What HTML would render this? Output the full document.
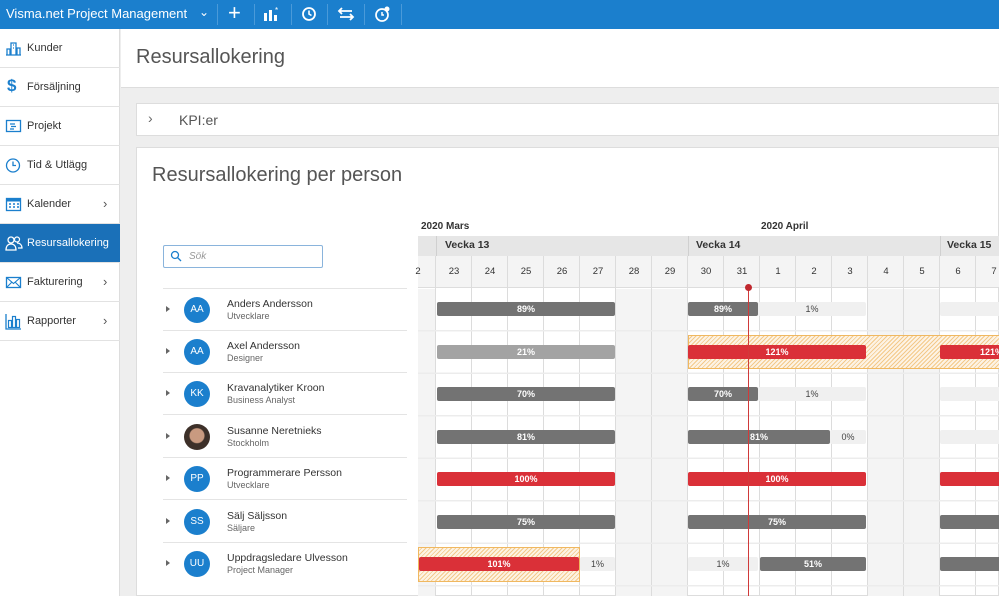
<!DOCTYPE html>
<html><head><meta charset="utf-8"><style>
*{box-sizing:border-box;margin:0;padding:0}
body{width:999px;height:596px;overflow:hidden;position:relative;background:#eeeeee;font-family:"Liberation Sans",sans-serif;color:#333}
.a{position:absolute}
#top{left:0;top:0;width:999px;height:29px;background:#1b7fcd}
#top .t{left:6px;top:6px;color:#fff;font-size:13px}
.sep{top:4px;width:1px;height:21px;background:#4a9ad9}
#side{left:0;top:29px;width:120px;height:567px;background:#fff;border-right:1px solid #ddd}
.it{left:0;width:120px;height:39px;border-bottom:1px solid #e2e2e2;font-size:11px;color:#333}
.it span{position:absolute;left:27px;top:13px}
.it svg{position:absolute;left:5px;top:11px}
.it b{position:absolute;left:103px;top:11px;font-weight:normal;font-size:13px;color:#555}
.act{background:#1a70b8;color:#fff}
.bar{position:absolute;height:14px;border-radius:2px;font-size:9px;font-weight:bold;color:#fff;text-align:center;line-height:14px}
.d{background:#737373}.l{background:#a3a3a3}.r{background:#da3038}.e{background:#f0f0f0;color:#444;font-weight:normal}
.h{position:absolute;border:1px solid #f0b860;background:repeating-linear-gradient(-45deg,#fdf3e4 0 2px,#f3c98a 2px 3px)}
.nm{position:absolute;left:163px;width:244px;height:42px;border-bottom:1px solid #e4e4e4}
.av{position:absolute;left:21px;top:8px;width:26px;height:26px;border-radius:50%;background:#1b7fcd;color:#fff;font-size:10px;text-align:center;line-height:26px}
.nm .n{position:absolute;left:64px;top:9px;font-size:10.5px;color:#333}
.nm .s{position:absolute;left:64px;top:22px;font-size:9px;color:#666}
.nm .tr{position:absolute;left:3px;top:17px;width:0;height:0;border-left:4px solid #666;border-top:3.5px solid transparent;border-bottom:3.5px solid transparent}
.dy{position:absolute;top:256px;height:32px;width:36px;text-align:center;font-size:9.5px;line-height:32px;color:#333}
</style></head><body>
<div id="top" class="a">
<div class="a t">Visma.net Project Management</div>
<div class="a" style="left:199px;top:5px;color:#fff;font-size:12px">&#8964;</div>
<div class="a sep" style="left:217px"></div>
<div class="a" style="left:228px;top:1px;color:#fff;font-size:22px;line-height:24px">+</div>
<div class="a sep" style="left:254px"></div>
<svg class="a" style="left:263px;top:6px" width="18" height="16"><rect x="1" y="7" width="3" height="8" fill="#fff"/><rect x="6" y="4" width="3" height="11" fill="#fff"/><rect x="11" y="9" width="3" height="6" fill="#fff"/><text x="12" y="7" fill="#fff" font-size="8">*</text></svg>
<div class="a sep" style="left:291px"></div>
<svg class="a" style="left:301px;top:6px" width="16" height="16"><circle cx="8" cy="8" r="6" fill="none" stroke="#fff" stroke-width="1.8"/><path d="M8 4.5V8l2.5 1.5" fill="none" stroke="#fff" stroke-width="1.6"/></svg>
<div class="a sep" style="left:327px"></div>
<svg class="a" style="left:337px;top:6px" width="18" height="16"><path d="M2 5h13M5 2L2 5l3 3M16 11H3M13 8l3 3-3 3" fill="none" stroke="#fff" stroke-width="1.8"/></svg>
<div class="a sep" style="left:364px"></div>
<svg class="a" style="left:374px;top:5px" width="18" height="18"><circle cx="8" cy="10" r="6" fill="none" stroke="#fff" stroke-width="1.7"/><path d="M8 7v3h2" fill="none" stroke="#fff" stroke-width="1.5"/><circle cx="13" cy="4" r="2.5" fill="#fff"/></svg>
<div class="a sep" style="left:401px"></div>
</div>
<div id="side" class="a">
<div class="a it" style="top:0"><svg width="17" height="16"><path d="M1 15h15M2 15V9h3v6M6 15V3h5v12M12 15V8h3v7M8 5h1M8 8h1" fill="none" stroke="#1b7fcd" stroke-width="1.3"/></svg><span>Kunder</span></div>
<div class="a it" style="top:39px"><span style="left:7px;top:8px;color:#1b7fcd;font-size:17px;font-weight:bold">$</span><span>Försäljning</span></div>
<div class="a it" style="top:78px"><svg width="17" height="16"><rect x="1.5" y="2.5" width="14" height="11" fill="none" stroke="#1b7fcd" stroke-width="1.3"/><path d="M5 6h5M6 8.5h5M5 11h4" stroke="#1b7fcd" stroke-width="1.2"/></svg><span>Projekt</span></div>
<div class="a it" style="top:117px"><svg width="17" height="17"><circle cx="8" cy="8.5" r="6.5" fill="none" stroke="#1b7fcd" stroke-width="1.3"/><path d="M8 4.5v4h3" fill="none" stroke="#1b7fcd" stroke-width="1.3"/></svg><span>Tid &amp; Utlägg</span></div>
<div class="a it" style="top:156px"><svg width="17" height="16"><rect x="1.5" y="2.5" width="14" height="12" fill="none" stroke="#1b7fcd" stroke-width="1.3"/><rect x="1.5" y="2.5" width="14" height="3" fill="#1b7fcd"/><path d="M4 8h2M8 8h2M12 8h2M4 11h2M8 11h2M12 11h2" stroke="#1b7fcd" stroke-width="1.5"/></svg><span>Kalender</span><b>&#8250;</b></div>
<div class="a it act" style="top:195px"><svg width="18" height="16"><circle cx="6" cy="5" r="3" fill="none" stroke="#fff" stroke-width="1.3"/><path d="M1 15c0-4 2-6 5-6s5 2 5 6z" fill="none" stroke="#fff" stroke-width="1.3"/><circle cx="12" cy="4.5" r="2.5" fill="none" stroke="#fff" stroke-width="1.2"/><path d="M12 8c3 0 5 2 5 5h-4" fill="none" stroke="#fff" stroke-width="1.2"/></svg><span>Resursallokering</span></div>
<div class="a it" style="top:234px"><svg width="17" height="16"><rect x="1.5" y="3.5" width="14" height="10" fill="none" stroke="#1b7fcd" stroke-width="1.3"/><path d="M1.5 3.5l7 6 7-6M1.5 13.5l5-5M15.5 13.5l-5-5" fill="none" stroke="#1b7fcd" stroke-width="1.1"/></svg><span>Fakturering</span><b>&#8250;</b></div>
<div class="a it" style="top:273px"><svg width="17" height="17"><path d="M1 1v15h15" fill="none" stroke="#1b7fcd" stroke-width="1.3"/><rect x="3.5" y="7.5" width="3" height="7" fill="none" stroke="#1b7fcd" stroke-width="1.2"/><rect x="7.5" y="3.5" width="3" height="11" fill="none" stroke="#1b7fcd" stroke-width="1.2"/><rect x="11.5" y="6.5" width="3" height="8" fill="none" stroke="#1b7fcd" stroke-width="1.2"/></svg><span>Rapporter</span><b>&#8250;</b></div>
</div>
<div class="a" style="left:121px;top:29px;width:878px;height:59px;background:#fff;border-bottom:1px solid #ddd"></div>
<div class="a" style="left:136px;top:46px;font-size:20px;color:#555">Resursallokering</div>
<div class="a" style="left:136px;top:103px;width:863px;height:33px;background:#fff;border:1px solid #ddd"></div>
<div class="a" style="left:148px;top:110px;font-size:14px;color:#666">&#8250;</div>
<div class="a" style="left:179px;top:112px;font-size:14px;color:#555">KPI:er</div>
<div class="a" style="left:136px;top:147px;width:863px;height:449px;background:#fff;border:1px solid #ddd"></div>
<div class="a" style="left:152px;top:164px;font-size:20px;color:#555">Resursallokering per person</div>
<div class="a" style="left:163px;top:245px;width:160px;height:23px;border:1px solid #8ab4dc;border-radius:2px"></div>
<svg class="a" style="left:170px;top:250px" width="12" height="12"><circle cx="5" cy="5" r="3.5" fill="none" stroke="#1b7fcd" stroke-width="1.3"/><path d="M7.5 7.5L11 11" stroke="#1b7fcd" stroke-width="1.3"/></svg>
<div class="a" style="left:189px;top:251px;font-size:10px;color:#999;font-style:italic">Sök</div>
<div class="a" style="left:163px;top:288px;width:244px;height:1px;background:#e4e4e4"></div>
<div class="nm" style="top:289px"><div class="tr"></div><div class="av">AA</div><div class="n">Anders Andersson</div><div class="s">Utvecklare</div></div>
<div class="nm" style="top:331px"><div class="tr"></div><div class="av">AA</div><div class="n">Axel Andersson</div><div class="s">Designer</div></div>
<div class="nm" style="top:373px"><div class="tr"></div><div class="av">KK</div><div class="n">Kravanalytiker Kroon</div><div class="s">Business Analyst</div></div>
<div class="nm" style="top:416px"><div class="tr"></div><div class="av" style="background:radial-gradient(circle at 50% 45%,#c99a80 0 7px,#3d3029 8px)"></div><div class="n">Susanne Neretnieks</div><div class="s">Stockholm</div></div>
<div class="nm" style="top:458px"><div class="tr"></div><div class="av">PP</div><div class="n">Programmerare Persson</div><div class="s">Utvecklare</div></div>
<div class="nm" style="top:501px"><div class="tr"></div><div class="av">SS</div><div class="n">Sälj Säljsson</div><div class="s">Säljare</div></div>
<div class="nm" style="top:543px;border:none"><div class="tr"></div><div class="av">UU</div><div class="n">Uppdragsledare Ulvesson</div><div class="s">Project Manager</div></div>
<!-- chart -->
<div class="a" style="left:421px;top:221px;font-size:10px;font-weight:bold;color:#333">2020 Mars</div>
<div class="a" style="left:761px;top:221px;font-size:10px;font-weight:bold;color:#333">2020 April</div>
<div class="a" style="left:418px;top:236px;width:581px;height:20px;background:#e6e6e6"></div>
<div class="a" style="left:445px;top:239px;font-size:10.5px;font-weight:bold">Vecka 13</div>
<div class="a" style="left:696px;top:239px;font-size:10.5px;font-weight:bold">Vecka 14</div>
<div class="a" style="left:947px;top:239px;font-size:10.5px;font-weight:bold">Vecka 15</div>
<div class="a" style="left:418px;top:256px;width:581px;height:32px;background:#f4f4f4;border-bottom:1px solid #ddd"></div>
<div class="a" style="left:418px;top:289px;width:18px;height:307px;background:#f4f4f4"></div>
<div class="a" style="left:616px;top:289px;width:72px;height:307px;background:#f4f4f4"></div>
<div class="a" style="left:868px;top:289px;width:72px;height:307px;background:#f4f4f4"></div>
<div class="a" style="left:418px;top:256px;width:581px;height:340px;background:repeating-linear-gradient(90deg,transparent 0 17px,#dcdcdc 17px 18px,transparent 18px 36px)"></div>
<div class="a" style="left:418px;top:289px;width:581px;height:307px;background:repeating-linear-gradient(180deg,transparent 0 41px,#ececec 41px 42.5px)"></div>
<div class="a" style="left:436px;top:236px;width:1px;height:20px;background:#d0d0d0"></div>
<div class="a" style="left:688px;top:236px;width:1px;height:20px;background:#d0d0d0"></div>
<div class="a" style="left:940px;top:236px;width:1px;height:20px;background:#d0d0d0"></div>
<div class="dy" style="left:400px">2</div><div class="dy" style="left:436px">23</div><div class="dy" style="left:472px">24</div><div class="dy" style="left:508px">25</div><div class="dy" style="left:544px">26</div><div class="dy" style="left:580px">27</div><div class="dy" style="left:616px">28</div><div class="dy" style="left:652px">29</div><div class="dy" style="left:688px">30</div><div class="dy" style="left:724px">31</div><div class="dy" style="left:760px">1</div><div class="dy" style="left:796px">2</div><div class="dy" style="left:832px">3</div><div class="dy" style="left:868px">4</div><div class="dy" style="left:904px">5</div><div class="dy" style="left:940px">6</div><div class="dy" style="left:976px">7</div>
<div class="h" style="left:688px;top:335px;width:320px;height:34px"></div>
<div class="h" style="left:418px;top:547px;width:162px;height:35px"></div>
<div class="bar d" style="left:437px;top:302px;width:178px">89%</div>
<div class="bar d" style="left:688px;top:302px;width:70px">89%</div>
<div class="bar e" style="left:758px;top:302px;width:108px">1%</div>
<div class="bar e" style="left:940px;top:302px;width:70px"></div>
<div class="bar l" style="left:437px;top:345px;width:178px">21%</div>
<div class="bar r" style="left:688px;top:345px;width:178px">121%</div>
<div class="bar r" style="left:940px;top:345px;width:70px;text-align:left;padding-left:40px">121%</div>
<div class="bar d" style="left:437px;top:387px;width:178px">70%</div>
<div class="bar d" style="left:688px;top:387px;width:70px">70%</div>
<div class="bar e" style="left:758px;top:387px;width:108px">1%</div>
<div class="bar e" style="left:940px;top:387px;width:70px"></div>
<div class="bar d" style="left:437px;top:430px;width:178px">81%</div>
<div class="bar d" style="left:688px;top:430px;width:142px">81%</div>
<div class="bar e" style="left:830px;top:430px;width:36px">0%</div>
<div class="bar e" style="left:940px;top:430px;width:70px"></div>
<div class="bar r" style="left:437px;top:472px;width:178px">100%</div>
<div class="bar r" style="left:688px;top:472px;width:178px">100%</div>
<div class="bar r" style="left:940px;top:472px;width:70px"></div>
<div class="bar d" style="left:437px;top:515px;width:178px">75%</div>
<div class="bar d" style="left:688px;top:515px;width:178px">75%</div>
<div class="bar d" style="left:940px;top:515px;width:70px"></div>
<div class="bar r" style="left:419px;top:557px;width:160px">101%</div>
<div class="bar e" style="left:580px;top:557px;width:35px">1%</div>
<div class="bar e" style="left:688px;top:557px;width:70px">1%</div>
<div class="bar d" style="left:760px;top:557px;width:106px">51%</div>
<div class="bar d" style="left:940px;top:557px;width:70px"></div>
<div class="a" style="left:748px;top:287px;width:1px;height:309px;background:#d03a3a"></div>
<div class="a" style="left:745px;top:284px;width:7px;height:7px;border-radius:50%;background:#c0282e"></div>
</body></html>
